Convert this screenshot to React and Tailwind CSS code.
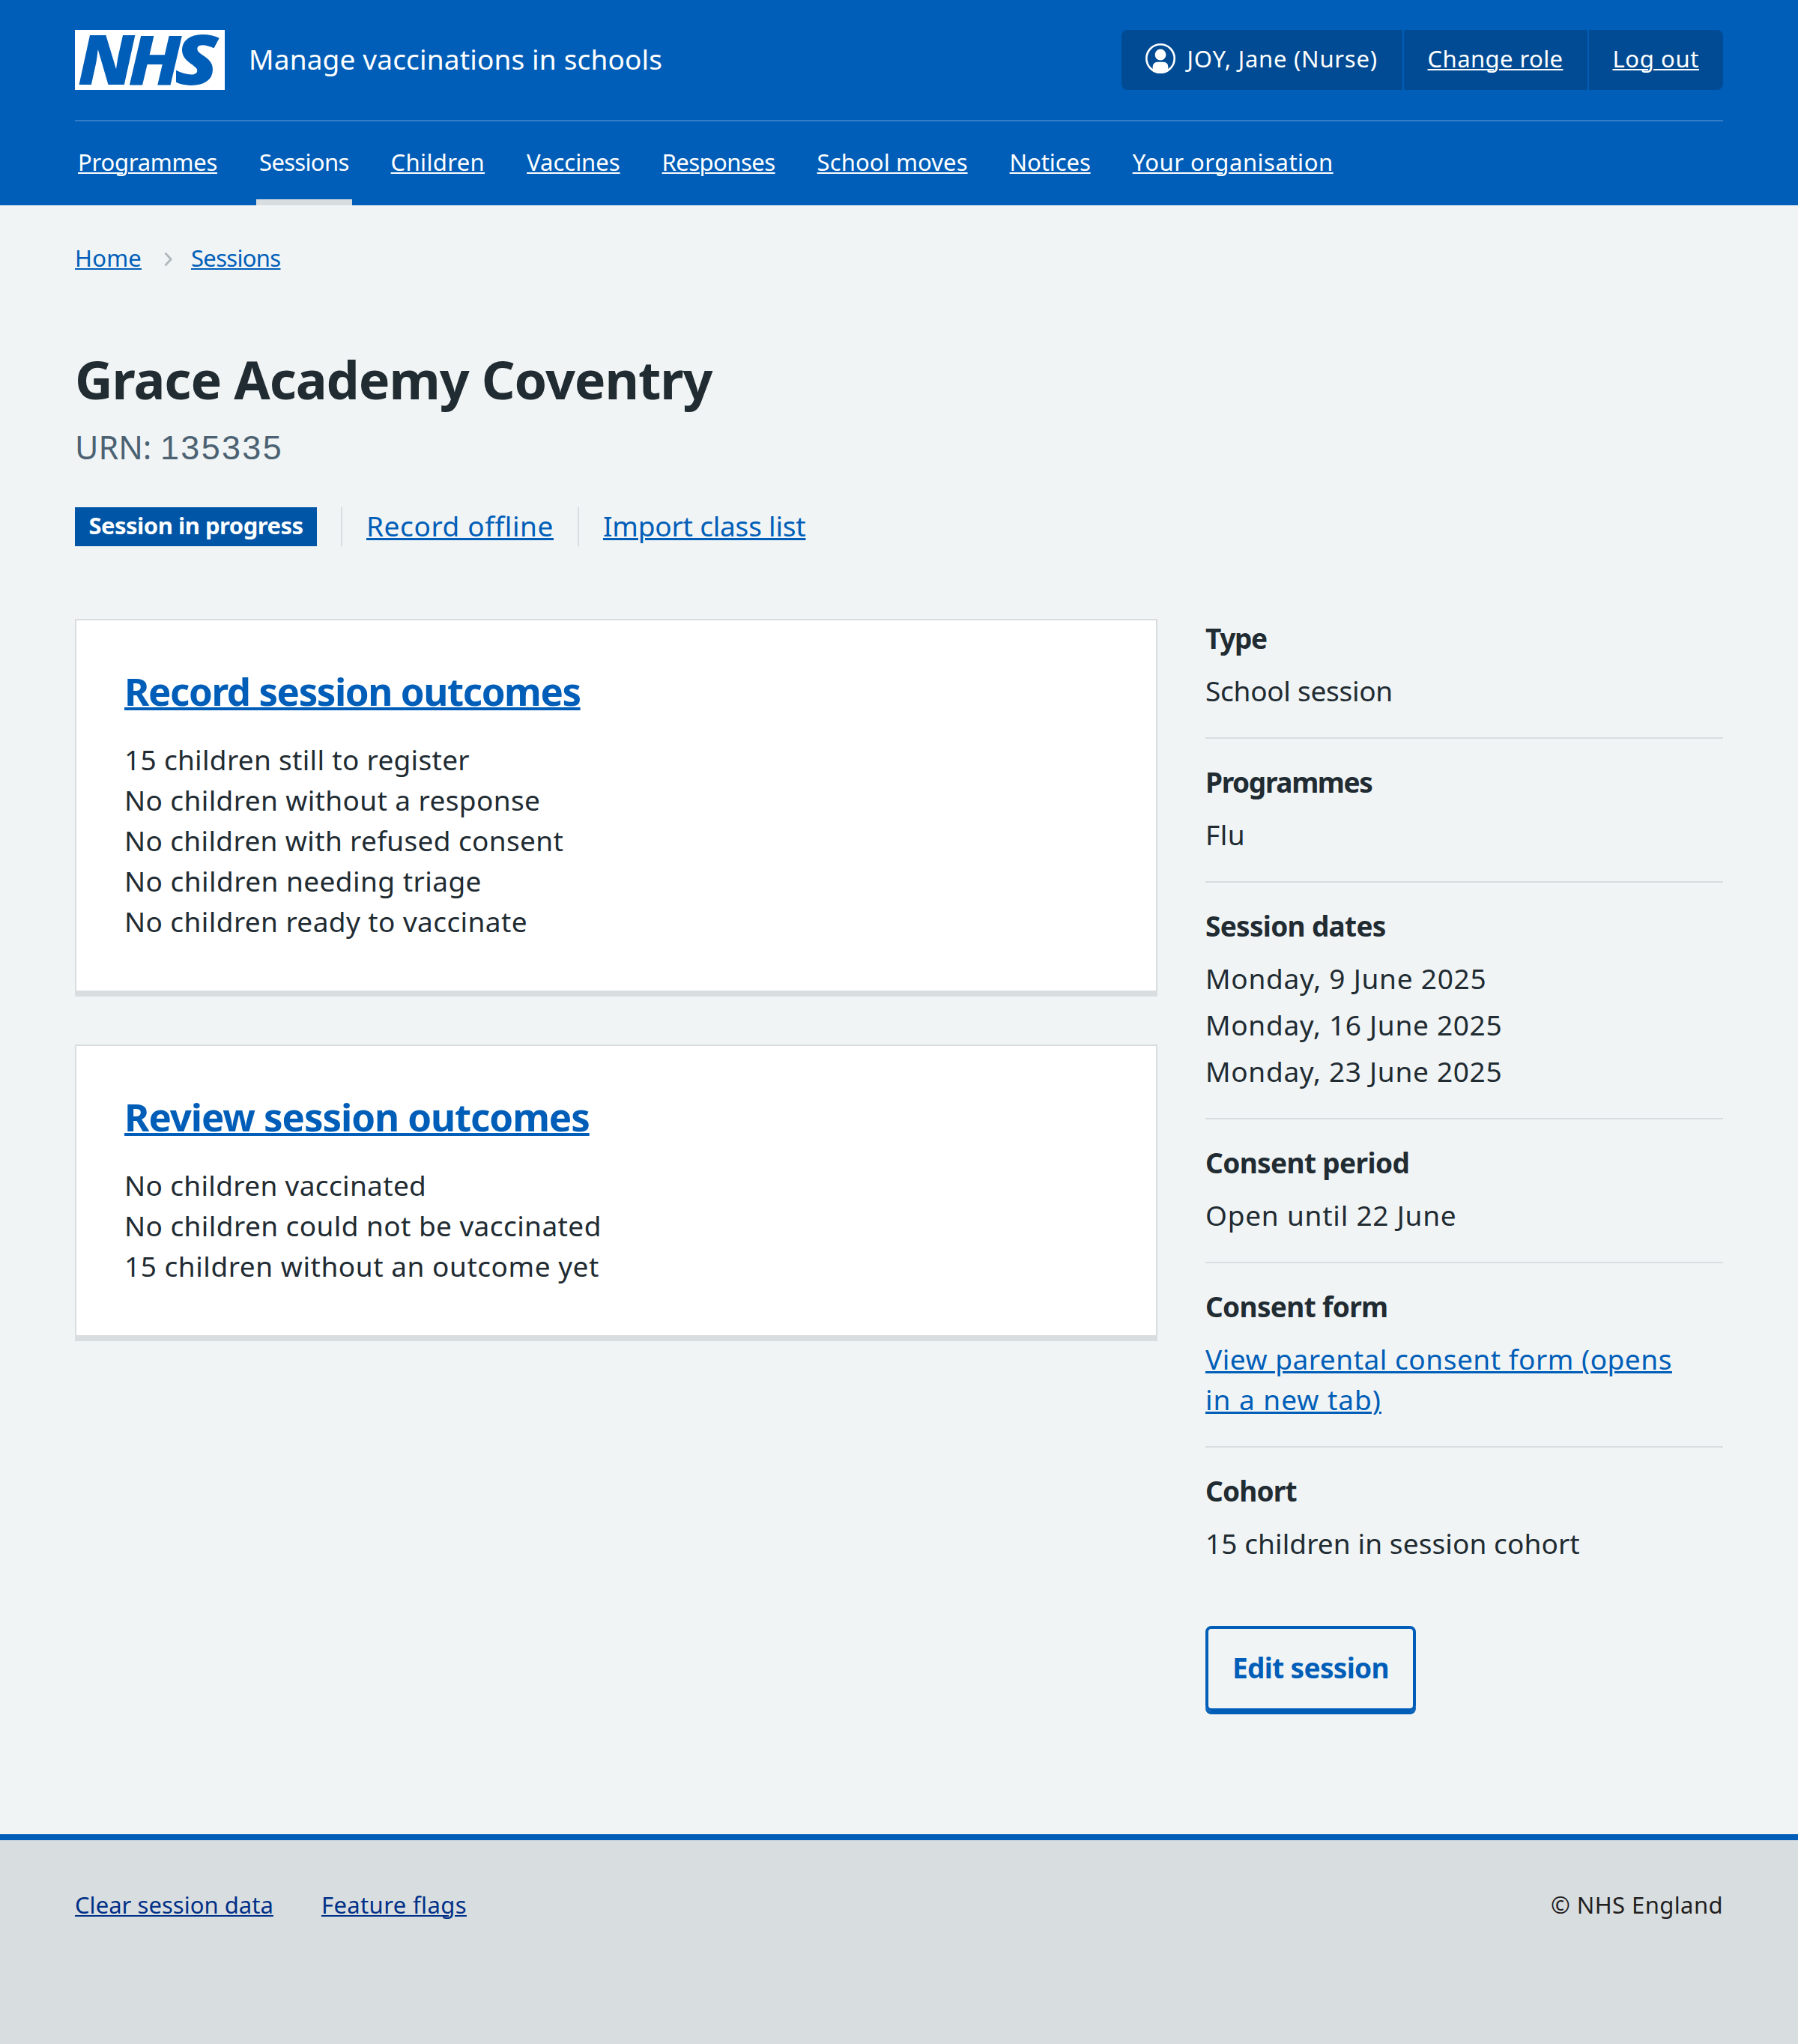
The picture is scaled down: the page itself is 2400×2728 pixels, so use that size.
const navItems = [
  { label: "Programmes", track: "tracking-[-0.26px]" },
  { label: "Sessions", track: "tracking-[-0.68px]", current: true },
  { label: "Children", track: "tracking-[0.36px]" },
  { label: "Vaccines", track: "tracking-[-0.02px]" },
  { label: "Responses", track: "tracking-[-0.53px]" },
  { label: "School moves", track: "tracking-[0.1px]" },
  { label: "Notices", track: "tracking-[-0.1px]" },
  { label: "Your organisation", track: "tracking-[0.53px]" },
];

const cards = [
  {
    title: "Record session outcomes",
    track: "tracking-[-1.42px]",
    rows: [
      { text: "15 children still to register", track: "tracking-[0.31px]" },
      { text: "No children without a response", track: "tracking-[0.39px]" },
      { text: "No children with refused consent", track: "tracking-[0.36px]" },
      { text: "No children needing triage", track: "tracking-[0.45px]" },
      { text: "No children ready to vaccinate", track: "tracking-[0.41px]" },
    ],
  },
  {
    title: "Review session outcomes",
    track: "tracking-[-1.08px]",
    rows: [
      { text: "No children vaccinated", track: "tracking-[0.34px]" },
      { text: "No children could not be vaccinated", track: "tracking-[0.42px]" },
      { text: "15 children without an outcome yet", track: "tracking-[0.54px]" },
    ],
  },
];

function NhsLogo() {
  return (
    <svg
      viewBox="0 0 200 80"
      className="h-20 w-[200px] shrink-0 overflow-visible"
      role="img"
      aria-label="NHS"
    >
      <rect width="200" height="80" fill="#fff" />
      <g
        fill="#005eb8"
        fontFamily='"Noto Sans", "Open Sans", sans-serif'
        fontStyle="italic"
        fontSize="91.6"
      >
        <text fontWeight="900" transform="translate(3.9 72.7) scale(1.048 1)">N</text>
        <text fontWeight="800" transform="translate(70.8 72.7) scale(1.105 1)">H</text>
        <text fontWeight="900" transform="translate(132.7 72.9) scale(1.173 1.015)">S</text>
      </g>
    </svg>
  );
}

function UserIcon() {
  return (
    <svg viewBox="0 0 40 40" className="size-10 shrink-0" fill="none">
      <defs>
        <clipPath id="user-disc">
          <circle cx="20" cy="20" r="20" />
        </clipPath>
      </defs>
      <circle cx="20" cy="20" r="18.7" stroke="#fff" strokeWidth="2.6" />
      <circle cx="20" cy="15" r="7.4" fill="#fff" />
      <path
        clipPath="url(#user-disc)"
        fill="#fff"
        d="M9.7 40V30.7a6 6 0 0 1 6-6h8.6a6 6 0 0 1 6 6V40Z"
      />
    </svg>
  );
}

function Chevron() {
  return (
    <svg viewBox="0 0 12 20" className="mt-1 h-5 w-3" fill="none">
      <path
        d="m2.2 2.4 7 7.6-7 7.6"
        stroke="#aeb7bd"
        strokeWidth="2.8"
        strokeLinecap="round"
        strokeLinejoin="round"
      />
    </svg>
  );
}

function Card({ title, track, rows }) {
  return (
    <section className="border-2 border-b-8 border-[#d8dde0] bg-white px-16 pt-[62px] pb-[65px]">
      <h2 className="text-[51px] leading-[64px] font-bold whitespace-nowrap">
        <a
          className={`text-[#005eb8] underline decoration-[4px] underline-offset-[2px] ${track}`}
        >
          {title}
        </a>
      </h2>
      <ul className="mt-[33px] text-[37px] leading-[54px]">
        {rows.map((row) => (
          <li key={row.text} className={`whitespace-nowrap ${row.track}`}>
            {row.text}
          </li>
        ))}
      </ul>
    </section>
  );
}

function Detail({ term, track, last, children }) {
  return (
    <div className={last ? "" : "mb-8 border-b-2 border-[#d8dde0] pb-[35px]"}>
      <dt className={`mb-[17px] leading-[52px] font-bold ${track}`}>{term}</dt>
      <dd className="whitespace-nowrap">{children}</dd>
    </div>
  );
}

export default function App() {
  return (
    <div className="flex min-h-[2728px] w-[2400px] flex-col bg-[#f0f4f5] font-['Noto_Sans','Open_Sans',sans-serif] text-[#212b32]">
      <header className="h-[274px] bg-[#005eb8] px-[100px] pt-10 text-white">
        <div className="flex h-20 justify-between">
          <div className="flex items-center gap-8">
            <NhsLogo />
            <span className="pb-[3px] text-[37px] tracking-[0.16px]">
              Manage vaccinations in schools
            </span>
          </div>
          <ul className="flex h-20 divide-x-2 divide-[#005eb8] rounded-lg bg-[#004b93] text-[31px] whitespace-nowrap">
            <li className="flex w-[377px] items-center gap-4 pb-1 pl-8">
              <UserIcon />
              <span className="tracking-[0.75px]">JOY, Jane (Nurse)</span>
            </li>
            <li className="flex items-center px-8 pb-1">
              <a className="tracking-[0.42px] underline decoration-2 underline-offset-2">
                Change role
              </a>
            </li>
            <li className="flex items-center px-8 pb-1">
              <a className="tracking-[0.61px] underline decoration-2 underline-offset-2">
                Log out
              </a>
            </li>
          </ul>
        </div>
        <nav className="mt-10 border-t-2 border-[#337ec6]">
          <ul className="flex h-28 gap-12 text-[31px] whitespace-nowrap">
            {navItems.map((item) => (
              <li
                key={item.label}
                className={`flex items-center border-b-8 px-1 pt-1 ${item.track} ${
                  item.current ? "border-[#d8dde0]" : "border-transparent"
                }`}
              >
                <a className={item.current ? "" : "underline decoration-2 underline-offset-2"}>
                  {item.label}
                </a>
              </li>
            ))}
          </ul>
        </nav>
      </header>

      <main className="flex grow flex-col px-[100px] pt-[46px]">
        <div className="flex h-12 items-center text-[31px] leading-[48px] text-[#005eb8]">
          <a className="mr-[30px] tracking-[0.2px] underline decoration-2 underline-offset-2">
            Home
          </a>
          <Chevron />
          <a className="ml-6 tracking-[-0.68px] underline decoration-2 underline-offset-2">
            Sessions
          </a>
        </div>

        <h1 className="mt-[98px] text-[70px] leading-[80px] font-bold tracking-[-1.06px]">
          Grace Academy Coventry
        </h1>
        <p className="mt-[21px] flex h-[60px] items-baseline text-[43px] leading-[60px] text-[#4c6272]">
          <span className="w-[114px] whitespace-nowrap">URN:</span>
          <span className="font-['Liberation_Sans',sans-serif] text-[45px] tracking-[2.3px]">
            135335
          </span>
        </p>

        <div className="mt-[50px] flex h-[52px] text-[37px] whitespace-nowrap">
          <strong className="flex w-[323px] items-center justify-center bg-[#0055a6] pb-1 text-[31px] font-bold tracking-[-0.5px] text-white">
            Session in progress
          </strong>
          <div className="ml-8 flex items-center border-l-2 border-[#d8dde0] px-8 pb-[3px] text-[#005eb8]">
            <a className="tracking-[0.6px] underline decoration-[3px] underline-offset-[2px]">
              Record offline
            </a>
          </div>
          <div className="flex items-center border-l-2 border-[#d8dde0] px-8 pb-[3px] text-[#005eb8]">
            <a className="tracking-[-0.2px] underline decoration-[3px] underline-offset-[2px]">
              Import class list
            </a>
          </div>
        </div>

        <div className="mt-[97px] grid grid-cols-[1445px_691px] items-start gap-16">
          <div className="flex flex-col gap-16">
            {cards.map((card) => (
              <Card key={card.title} {...card} />
            ))}
          </div>

          <aside className="text-[37px] leading-[54px]">
            <dl>
              <Detail term="Type" track="tracking-[-1.4px]">
                <span className="tracking-[-0.27px]">School session</span>
              </Detail>
              <Detail term="Programmes" track="tracking-[-1.35px]">
                <span className="tracking-[0.5px]">Flu</span>
              </Detail>
              <Detail term="Session dates" track="tracking-[-0.7px]">
                <ul className="flex flex-col gap-2">
                  <li className="tracking-[0.76px]">Monday, 9 June 2025</li>
                  <li className="tracking-[0.71px]">Monday, 16 June 2025</li>
                  <li className="tracking-[0.71px]">Monday, 23 June 2025</li>
                </ul>
              </Detail>
              <Detail term="Consent period" track="tracking-[-0.62px]">
                <span className="tracking-[0.78px]">Open until 22 June</span>
              </Detail>
              <Detail term="Consent form" track="tracking-[-0.66px]">
                <a className="text-[#005eb8] underline decoration-[3px] underline-offset-[2px]">
                  <span className="tracking-[0.53px]">View parental consent form (opens</span>
                  <br />
                  <span className="tracking-[0.99px]">in a new tab)</span>
                </a>
              </Detail>
              <Detail term="Cohort" track="tracking-[-0.8px]" last>
                <span className="tracking-[0.1px]">15 children in session cohort</span>
              </Detail>
            </dl>
            <button className="mt-[83px] block h-[114px] w-[281px] rounded-lg border-4 border-[#005eb8] pb-[2px] font-bold tracking-[-0.66px] whitespace-nowrap text-[#005eb8] shadow-[0_4px_0_#005eb8]">
              Edit session
            </button>
          </aside>
        </div>
      </main>

      <footer className="flex h-[280px] items-start border-t-8 border-[#005eb8] bg-[#d8dde0] px-[100px] pt-[62px] text-[31px] leading-[48px]">
        <a className="tracking-[0.03px] text-[#003087] underline decoration-2 underline-offset-2">
          Clear session data
        </a>
        <a className="ml-16 tracking-[0.38px] text-[#003087] underline decoration-2 underline-offset-2">
          Feature flags
        </a>
        <span className="ml-auto tracking-[0.42px] text-[#231f20]">© NHS England</span>
      </footer>
    </div>
  );
}
